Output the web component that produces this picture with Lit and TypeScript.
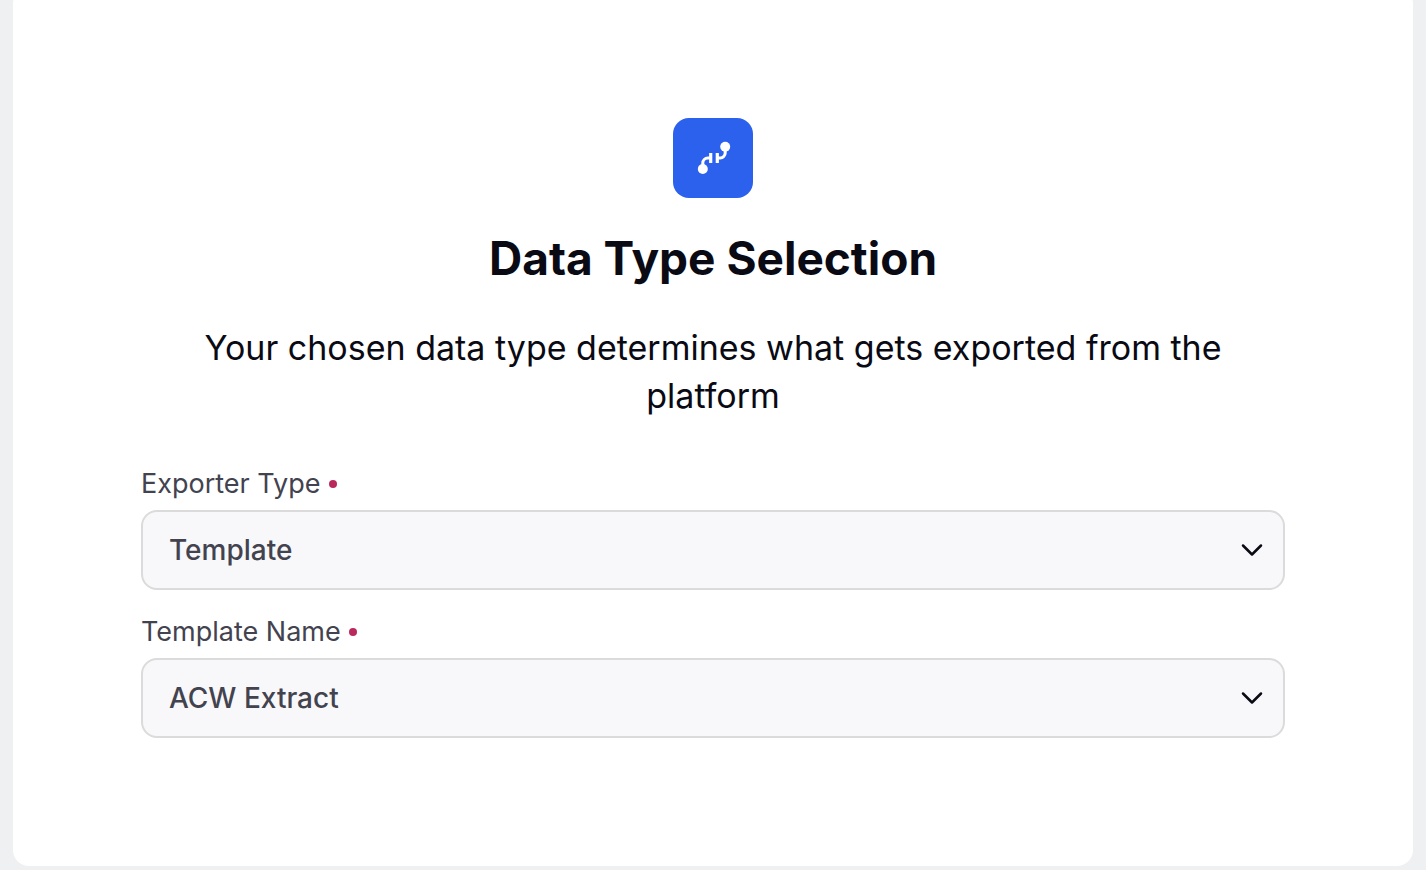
import { LitElement, html, css } from "lit";
import { customElement } from "lit/decorators.js";

@customElement("app-root")
export class AppRoot extends LitElement {
  static styles = css`
    :host {
      display: flow-root;
      box-sizing: border-box;
      min-height: 100vh;
      padding: 0 13px 4px;
      background: #eff0f2;
      font-family: Inter, "Liberation Sans", sans-serif;
      color: #0a0a14;
    }
    * { box-sizing: border-box; }
    .card {
      margin-top: -12px;
      background: #fff;
      border-radius: 16px;
      padding: 130px 128px 128px;
      display: flex;
      flex-direction: column;
      align-items: center;
    }
    .badge {
      width: 80px;
      height: 80px;
      border-radius: 16px;
      background: #2c61ee;
    }
    .badge svg { display: block; }
    h1 {
      margin: 28px 0 0;
      font-size: 46px;
      line-height: 64px;
      font-weight: 700;
      text-align: center;
    }
    .lead {
      margin: 34px 0 0;
      padding: 0 48px;
      font-size: 34px;
      line-height: 48px;
      text-align: center;
    }
    form {
      width: 100%;
      margin-top: 48px;
      display: grid;
      gap: 26px;
    }
    .field { display: flex; flex-direction: column; gap: 10px; }
    label {
      display: flex;
      align-items: center;
      gap: 8px;
      font-size: 27px;
      line-height: 32px;
      color: #43434f;
    }
    .dot { width: 8px; height: 8px; border-radius: 50%; background: #b9295c; }
    .box { display: grid; align-items: center; }
    .box > * { grid-area: 1 / 1; }
    select {
      appearance: none;
      width: 100%;
      height: 80px;
      padding: 0 64px 0 26px;
      border: 2px solid #dbdbdc;
      border-radius: 16px;
      background: #f8f8fa;
      font: 500 28px/40px Inter, "Liberation Sans", sans-serif;
      color: #43434f;
    }
    .chevron { justify-self: end; margin-right: 20px; pointer-events: none; }
  `;

  private field(id: string, label: string, value: string) {
    return html`
      <div class="field">
        <label for=${id}>${label}<span class="dot" aria-hidden="true"></span></label>
        <div class="box">
          <select id=${id} required><option>${value}</option></select>
          <svg class="chevron" width="26" height="26" viewBox="0 0 26 26" fill="none" stroke="#0a0a14" stroke-width="2.5" stroke-linecap="round" stroke-linejoin="round" aria-hidden="true">
            <path d="M4 8.5l9 9 9-9" />
          </svg>
        </div>
      </div>
    `;
  }

  render() {
    return html`
      <main class="card">
        <div class="badge">
          <svg width="80" height="80" viewBox="0 0 80 80" fill="none" stroke="#fff" stroke-width="3" aria-hidden="true">
            <circle cx="29.8" cy="51" r="5" fill="#fff" stroke="none" />
            <circle cx="52.2" cy="28.7" r="5" fill="#fff" stroke="none" />
            <path d="M29.8 51v-6a5 5 0 0 1 5-5h3M44 40h3.2a5 5 0 0 0 5-5v-6" />
            <path d="M37.7 35v10M44.3 35v10" stroke-width="3.2" />
          </svg>
        </div>
        <h1>Data Type Selection</h1>
        <p class="lead">Your chosen data type determines what gets exported from the platform</p>
        <form>
          ${this.field("exporter-type", "Exporter Type", "Template")}
          ${this.field("template-name", "Template Name", "ACW Extract")}
        </form>
      </main>
    `;
  }
}
